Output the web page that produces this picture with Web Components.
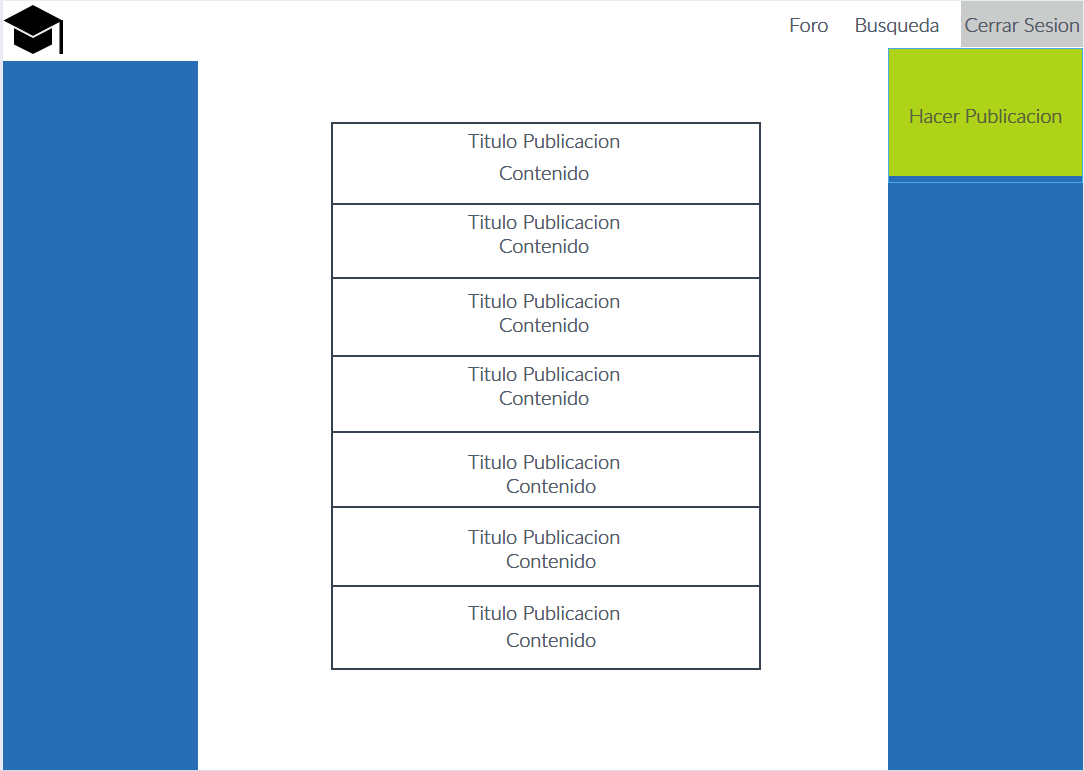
<!DOCTYPE html>
<html lang="es">
<head>
<meta charset="utf-8">
<meta name="viewport" content="width=device-width, initial-scale=1">
<title>Foro</title>
<style>
  body { margin: 0; background: #e9ebf5; }
</style>
</head>
<body>
<foro-page>
  <foro-logo slot="logo"></foro-logo>
  <foro-nav slot="nav"></foro-nav>
  <foro-feed>
    <foro-post space="small" loose><span slot="title">Titulo Publicacion</span>Contenido</foro-post>
    <foro-post space="small"><span slot="title">Titulo Publicacion</span>Contenido</foro-post>
    <foro-post space="medium"><span slot="title">Titulo Publicacion</span>Contenido</foro-post>
    <foro-post space="small"><span slot="title">Titulo Publicacion</span>Contenido</foro-post>
    <foro-post space="large" indent><span slot="title">Titulo Publicacion</span>Contenido</foro-post>
    <foro-post space="large" indent><span slot="title">Titulo Publicacion</span>Contenido</foro-post>
    <foro-post space="big" indent><span slot="title">Titulo Publicacion</span>Contenido</foro-post>
  </foro-feed>
  <foro-publish slot="actions">Hacer Publicacion</foro-publish>
</foro-page>

<script>
function define(name, markup) {
  const template = document.createElement('template');
  template.innerHTML = markup;
  customElements.define(name, class extends HTMLElement {
    constructor() {
      super();
      this.attachShadow({ mode: 'open' }).append(template.content.cloneNode(true));
    }
  });
}

define('foro-page', `
  <style>
    :host {
      --blue: #286eb4;
      --ink: #535b68;
      display: block;
      box-sizing: border-box;
      min-height: 100vh;
      padding: 1px 1px 1px 3px;
      background: linear-gradient(#d5dde6, #d5dde6) bottom / 100% 1px no-repeat #e9ebf5;
      font: 300 20px/24px Lato, sans-serif;
      color: var(--ink);
      /* thickens the light weight without changing its widths */
      text-shadow: 0 0 0 currentColor, 0 0 0 currentColor;
    }
    .frame {
      display: grid;
      grid-template-columns: 195px minmax(0, 1fr) 195px;
      grid-template-rows: 47px 1fr;
      min-height: calc(100vh - 2px);
      background: #fff;
    }
    .left { grid-row: 1 / 3; display: flex; flex-direction: column; }
    .panel { flex: 1; background: var(--blue); }
    header { grid-column: 2 / 4; }
    main { grid-column: 2; padding: 74px 0 74px 6px; }
    .right { grid-column: 3; background: var(--blue); }
  </style>
  <div class="frame">
    <div class="left"><slot name="logo"></slot><div class="panel"></div></div>
    <header><slot name="nav"></slot></header>
    <main><slot></slot></main>
    <aside class="right"><slot name="actions"></slot></aside>
  </div>`);

define('foro-logo', `
  <style>
    :host { display: block; height: 60px; }
    a, svg { display: block; width: 61px; }
    svg { height: 60px; }
  </style>
  <a href="#" aria-label="Inicio">
    <svg viewBox="0 0 61 60" aria-hidden="true">
      <path d="M11 27 30 37l19-10V43.500L30 53 11 43.500Z"/>
      <path d="M30 4 59.500 19.500 30 35 .5 19.500Z"/>
      <path d="M11 26 30 36 49 26" fill="none" stroke="#e4e4e4" stroke-width="1.500"/>
      <path d="M56.500 20 60 19V53H56.500Z"/>
    </svg>
  </a>`);

define('foro-nav', `
  <style>
    :host { display: block; }
    nav { display: flex; justify-content: flex-end; align-items: center; height: 46px; }
    a { color: inherit; text-decoration: none; margin-right: 26px; }
    a:last-of-type { margin-right: 22px; }
    button {
      align-self: stretch; padding: 0 3px; border: 0;
      background: #cacccb; color: inherit; font: inherit; text-shadow: inherit;
    }
  </style>
  <nav>
    <a href="#foro">Foro</a>
    <a href="#busqueda">Busqueda</a>
    <button type="button">Cerrar Sesion</button>
  </nav>`);

define('foro-publish', `
  <style>
    :host {
      display: block; box-sizing: border-box; height: 135px;
      border: 1px solid #47aaf0;
    }
    button {
      display: block; width: 100%; height: 127px; padding: 4px 0 0; border: 0;
      background: #aed318; color: #56603f; font: inherit; text-shadow: inherit;
    }
  </style>
  <button type="button"><slot></slot></button>`);

define('foro-feed', `
  <style>
    :host {
      --line: #36424f;
      display: grid;
      grid-template-rows: 81px 74px 78px 76px 75px 79px 83px;
      box-sizing: border-box;
      width: 430px;
      max-width: 100%;
      margin: 0 auto;
      border: 2px solid var(--line);
      border-bottom: 0;
    }
  </style>
  <slot></slot>`);

define('foro-post', `
  <style>
    :host {
      display: block; box-sizing: border-box;
      padding-right: 4px; border-bottom: 2px solid var(--line);
      text-align: center;
    }
    :host([space="small"]) { padding-top: 4px; }
    :host([space="medium"]) { padding-top: 9px; }
    :host([space="big"]) { padding-top: 13px; }
    :host([space="large"]) { padding-top: 16px; }
    h2, p { margin: 0; font: inherit; }
    :host([loose]) h2 { margin-bottom: 8px; }
    :host([space="big"]) h2 { margin-bottom: 3px; }
    :host([indent]) p { padding-left: 14px; }
  </style>
  <article>
    <h2><slot name="title"></slot></h2>
    <p><slot></slot></p>
  </article>`);
</script>
</body>
</html>
